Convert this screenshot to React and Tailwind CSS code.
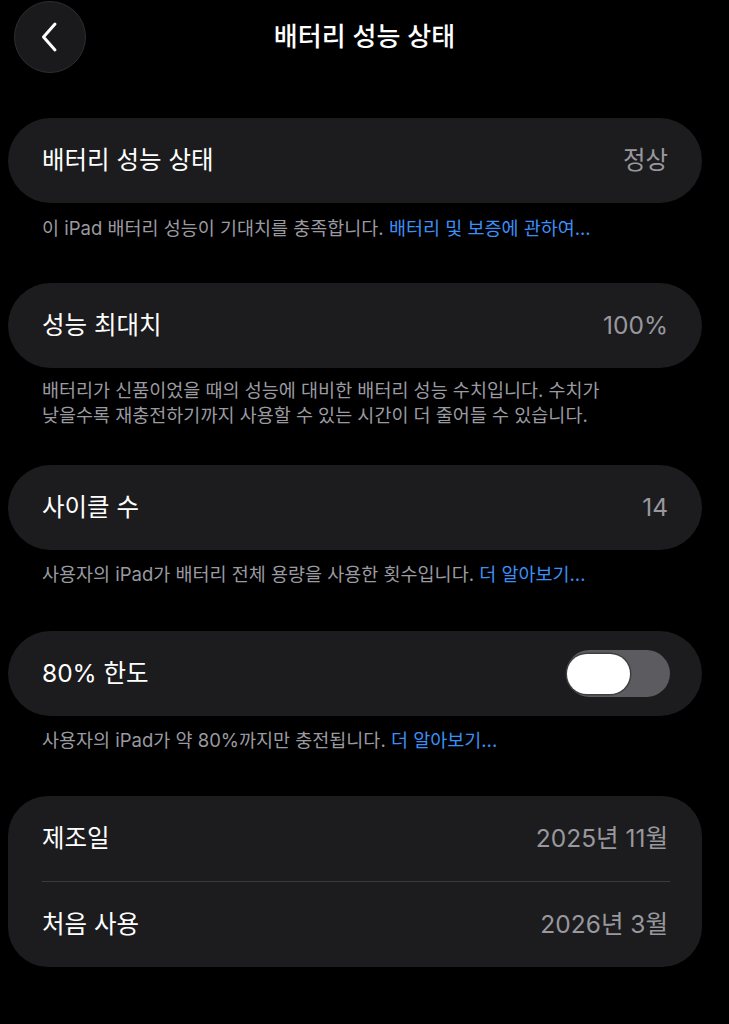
// --- COMPONENTS ---

const Header = () => (
  <header className="grid grid-cols-[1fr_auto_1fr] items-center h-[73px] pt-px">
    <div className="pl-[14px]">
      <button className="w-[72px] h-[72px] rounded-full bg-[#1a1a1c] border border-[#2e2e30] flex items-center justify-center">
        <svg width="20" height="32" viewBox="0 0 20 32" fill="none">
          <path d="M15 3 L3.5 16 L15 29" stroke="#ffffff" strokeWidth="3" strokeLinecap="round" strokeLinejoin="round" />
        </svg>
      </button>
    </div>
    <h1 className="text-[26px] font-medium text-white leading-none">배터리 성능 상태</h1>
    <div />
  </header>
);

const Card = ({ label, children, className = '' }) => (
  <div className={`ml-2 w-[694px] h-[85px] rounded-full bg-[#1c1c1e] px-[34px] flex items-center justify-between ${className}`}>
    <span className="text-[24.5px] text-white leading-none">{label}</span>
    {children}
  </div>
);

const Value = ({ children }) => (
  <span className="text-[24.5px] text-[#98989e] leading-none">{children}</span>
);

const Note = ({ children, className = '' }) => (
  <p className={`pl-[42px] text-[18.5px] leading-[25px] text-[#9a9aa0] ${className}`}>{children}</p>
);

const Link = ({ children }) => <span className="text-[#3d8ef5]">{children}</span>;

const Toggle = () => (
  <div className="w-[104px] h-[47px] rounded-full bg-[#5b5b60] flex items-center pl-px -mr-[2px]">
    <div className="w-[63px] h-[40px] rounded-full bg-white shadow-[0_0_0_1.5px_rgba(60,60,64,0.9)]" />
  </div>
);

const Row = ({ label, value }) => (
  <div className="h-[85px] flex items-center justify-between">
    <span className="text-[24.5px] text-white leading-none">{label}</span>
    <Value>{value}</Value>
  </div>
);

const App = () => (
  <div className="w-[729px] h-[1024px] bg-black overflow-hidden font-['Inter','Noto_Sans_CJK_KR',sans-serif]">
    <Header />

    <Card label="배터리 성능 상태" className="mt-[45px]">
      <Value>정상</Value>
    </Card>
    <Note className="pt-[13px]">
      이 iPad 배터리 성능이 기대치를 충족합니다. <Link>배터리 및 보증에 관하여...</Link>
    </Note>

    <Card label="성능 최대치" className="mt-[42px]">
      <Value>100%</Value>
    </Card>
    <Note className="pt-[10px]">
      배터리가 신품이었을 때의 성능에 대비한 배터리 성능 수치입니다. 수치가
      <br />
      낮을수록 재충전하기까지 사용할 수 있는 시간이 더 줄어들 수 있습니다.
    </Note>

    <Card label="사이클 수" className="mt-[37px]">
      <Value>14</Value>
    </Card>
    <Note className="pt-[12px]">
      사용자의 iPad가 배터리 전체 용량을 사용한 횟수입니다. <Link>더 알아보기...</Link>
    </Note>

    <Card label="80% 한도" className="mt-[44px]">
      <Toggle />
    </Card>
    <Note className="pt-[12px]">
      사용자의 iPad가 약 80%까지만 충전됩니다. <Link>더 알아보기...</Link>
    </Note>

    {/* dates */}
    <div className="mt-[43px] ml-2 w-[694px] rounded-[40px] bg-[#1c1c1e] px-[34px]">
      <Row label="제조일" value="2025년 11월" />
      <div className="h-px bg-[#3a3a3c] -mr-[2px]" />
      <Row label="처음 사용" value="2026년 3월" />
    </div>
  </div>
);

export default App;
